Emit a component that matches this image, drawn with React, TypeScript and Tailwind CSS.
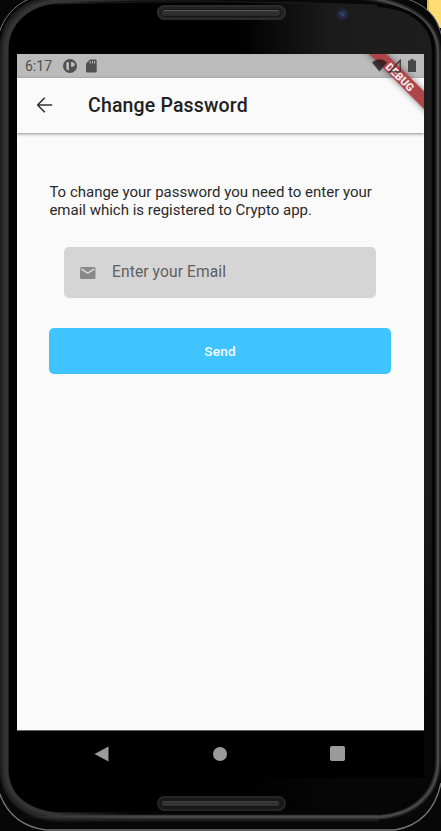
import React from "react";

function DeviceArtwork() {
  return (
    <svg className="absolute inset-0" width="441" height="831" viewBox="0 0 441 831" aria-hidden="true">
      <defs>
        <linearGradient id="face" x1="0" x2="1" y1="0" y2="0">
          <stop offset="0" stopColor="#000" />
          <stop offset="0.54" stopColor="#000" />
          <stop offset="0.76" stopColor="#1b1b1b" />
          <stop offset="1" stopColor="#1e1e1e" />
        </linearGradient>
        <linearGradient id="fade" x1="0" x2="0" y1="0" y2="1">
          <stop offset="0" stopColor="#000" stopOpacity="0" />
          <stop offset="0.6" stopColor="#000" stopOpacity="0.1" />
          <stop offset="0.9" stopColor="#000" stopOpacity="0.75" />
          <stop offset="1" stopColor="#000" stopOpacity="0.8" />
        </linearGradient>
        <linearGradient id="pill" x1="0" x2="0" y1="0" y2="1">
          <stop offset="0" stopColor="#444" />
          <stop offset="0.25" stopColor="#333" />
          <stop offset="1" stopColor="#292929" />
        </linearGradient>
        <linearGradient id="bottomRim" gradientUnits="userSpaceOnUse" x1="20" x2="150" y1="0" y2="0">
          <stop offset="0" stopColor="#484848" stopOpacity="0" />
          <stop offset="1" stopColor="#484848" />
        </linearGradient>
        <linearGradient id="bottomShade" gradientUnits="userSpaceOnUse" x1="50" x2="130" y1="0" y2="0">
          <stop offset="0" stopColor="#050505" stopOpacity="0" />
          <stop offset="1" stopColor="#050505" />
        </linearGradient>
        <radialGradient id="lens">
          <stop offset="0" stopColor="#34406c" />
          <stop offset="0.5" stopColor="#242943" />
          <stop offset="1" stopColor="#1c1c1e" />
        </radialGradient>
      </defs>
      <rect width="441" height="831" fill="#070707" />
      <rect x="427" width="14" height="28" fill="#ffdc73" />
      <rect x="427" width="2" height="28" fill="#e5b94e" />
      <path d="M0 34C5 19 13 7 28 0H408C426 5 438 17 441 34V784C434 810 418 826 395 831H46C22 828 8 815 0 793Z" fill="#080808" />
      <path d="M-1 33C4 18 13 6 29 -1M407 -1C426 5 438 17 442 38" fill="none" stroke="#757575" strokeWidth="1" />
      <path d="M220 -4Q110 -4 54 0Q25 3 12 22Q4 34 4 50V770C5 799 26 816 60 817H378" fill="none" stroke="#1c1c1c" strokeWidth="9" />
      <path d="M220 -4Q110 -4 54 1Q26 4 13 23Q5 34 5 50V770C6 798 27 815 60 816H378" fill="none" stroke="#282828" strokeWidth="7" />
      <path d="M220 -4Q110 -3 54 1.5Q27 4.5 14 24Q6 35 6 50V770C7 797 28 813 60 815H378" fill="none" stroke="#343434" strokeWidth="4" />
      <path d="M340 -5C412 -2 438 25 438 52V762C437 796 412 815 378 817" fill="none" stroke="#222" strokeWidth="6" />
      <path d="M340 -5C412 -2 438 25 438 52V762C437 796 412 815 378 817" fill="none" stroke="#484848" strokeWidth="2.5" />
      <path d="M20 817L380 817.01" fill="none" stroke="url(#bottomRim)" strokeWidth="2.5" />
      <path d="M9 50C9 26 27 7 54 4Q220 -1 377 5C409 7 431 23 432 51V761C431 790 410 810 377 812H64C29 811 9 796 9 768Z" fill="url(#face)" />
      <path d="M9 50C9 26 27 7 54 4Q220 -1 377 5C409 7 431 23 432 51V761C431 790 410 810 377 812H64C29 811 9 796 9 768Z" fill="url(#fade)" />
      <path d="M54 4Q220 -1 377 5C409 7 431 23 432 51" fill="none" stroke="#1d1d1d" />
      <path d="M377 5C409 7 433.5 23 433.5 51V761C432 790 412 811 378 813" fill="none" stroke="#050505" strokeWidth="3.5" />
      <path d="M50 813L380 813.01" fill="none" stroke="url(#bottomShade)" strokeWidth="3.5" />
      <path d="M-1 792C7 815 22 827 46 830H395C418 826 435 811 441 783" fill="none" stroke="#757575" strokeWidth="1.3" />
      <rect x="157" y="5" width="129" height="15" rx="7.5" fill="#222" />
      <rect x="158" y="6" width="127" height="13" rx="6.5" fill="none" stroke="#2c2c2c" strokeWidth="2" />
      <rect x="161" y="9.5" width="120" height="7" rx="3.5" fill="url(#pill)" stroke="#181818" />
      <path d="M164 10.5H278" stroke="#585858" strokeWidth="1" />
      <rect x="157" y="796" width="129" height="15" rx="7.5" fill="#191919" />
      <rect x="158" y="797" width="127" height="13" rx="6.5" fill="none" stroke="#252525" strokeWidth="2" />
      <rect x="161" y="800.5" width="119" height="6" rx="3" fill="#333" stroke="#151515" />
      <path d="M163 801.5H278" stroke="#3e3e3e" />
      <circle cx="342.5" cy="14" r="7" fill="url(#lens)" />
      <path d="M340 13H341M343 15H344" stroke="#56648f" />
    </svg>
  );
}

function StatusBar() {
  return (
    <div className="flex h-6 shrink-0 items-center bg-[#bbb] pl-2 text-[#505050]">
      <span className="w-[37px] text-[14px] leading-6">6:17</span>
      <svg width="16" height="16" viewBox="0 0 16 16" aria-hidden="true">
        <circle cx="8" cy="8" r="7" fill="currentColor" />
        <path d="M4.3 4.2H7V12.4L4.3 11.2ZM9 4.2H10.5A2.2 2.2 0 0 1 10.5 8.8H9Z" fill="#bbb" />
      </svg>
      <svg className="ml-[7px]" width="16" height="16" viewBox="0 0 16 16" aria-hidden="true">
        <path d="M5 1.5H10.5Q11.7 1.5 11.7 3V13Q11.7 14.5 10.5 14.5H2.2Q1 14.5 1 13V5.5Z" fill="currentColor" />
        <path d="M5.2 3V5.5M7.4 3V5.5M9.6 3V5.5" stroke="#bbb" />
      </svg>
    </div>
  );
}

function DebugRibbon() {
  return (
    <svg className="absolute right-0 top-0" width="64" height="64" viewBox="0 0 64 64" aria-label="Debug">
      <defs>
        <filter id="ribbonShadow" x="-30%" y="-30%" width="160%" height="160%">
          <feDropShadow dx="0" dy="0" stdDeviation="3" floodColor="#000" floodOpacity=".5" />
        </filter>
      </defs>
      <path d="M-13 -22L82 73V55L4 -22Z" fill="#ad4548" filter="url(#ribbonShadow)" />
      <path d="M12 8.5Q19.5 2 27 8.5L19.5 17.5Z" fill="#201818" opacity=".8" />
      <text x="40" y="27" transform="rotate(45 40 23)" textAnchor="middle" fontFamily="Roboto, sans-serif" fontWeight="900" fontSize="11" fill="#f5e8e8">DEBUG</text>
      <path d="M40.2 6.5V17.8H29.5Z" fill="none" stroke="#3c3030" strokeWidth="1.3" />
      <path d="M48 6.5H50.5V5H53.5V6.5H56V18H48Z" fill="#484848" />
    </svg>
  );
}

export default function App() {
  return (
    <main className="relative h-[831px] w-[441px] overflow-hidden bg-black pl-[17px] pt-[54px] font-['Roboto',sans-serif]">
      <DeviceArtwork />
      <section className="relative flex h-[724px] w-[407px] flex-col overflow-hidden bg-[#fafafa]">
        <StatusBar />
        <header className="flex h-[55px] shrink-0 items-center bg-[#fafafa] pl-5 shadow-[0_1px_3px_rgba(0,0,0,0.45)]">
          <svg className="mb-px" width="16" height="16" viewBox="0 0 16 16" fill="none" stroke="#333" strokeWidth="1.6" aria-label="Back">
            <path d="M15.2 8H.8M7.8 .8L.6 8L7.8 15.2" />
          </svg>
          <h1 className="ml-[35px] text-[19.5px] font-medium tracking-[0.16px] text-[#212121]">Change Password</h1>
        </header>
        <div className="flex grow flex-col px-8 pt-[50px]">
          <p className="whitespace-nowrap pl-[0.4px] text-[15px] leading-[18px] text-[#2a2a2a]">
            To change your password you need to enter your<br />email which is registered to Crypto app.
          </p>
          <div className="ml-[15px] mr-4 mt-7 flex h-[51px] items-center rounded-[5px] bg-[#d5d5d5] pl-4 text-[#606060]">
            <svg width="16" height="12" viewBox="0 0 16 12" aria-hidden="true">
              <rect width="15.5" height="12" rx="1.5" fill="#898989" />
              <path d="M1.2 2L7.75 6.2L14.3 2" fill="none" stroke="#d5d5d5" strokeWidth="1.5" />
            </svg>
            <span className="ml-4 pt-px text-[15.6px] tracking-[0.1px]">Enter your Email</span>
          </div>
          <button className="mr-px mt-[30px] h-[46px] rounded-[5px] bg-[#40c4ff] text-[13.6px] font-medium tracking-[0.2px] text-[#f5fcff]">Send</button>
        </div>
        <nav className="flex h-12 shrink-0 items-center border-t border-[#626262] bg-black pb-0.5 pl-[77px] text-[#9b9b9b]">
          <svg width="15" height="16" viewBox="0 0 15 16" aria-label="Back">
            <path d="M14.5 .5V15.5L.5 8Z" fill="currentColor" />
          </svg>
          <span className="ml-[104px] size-[14px] rounded-full bg-current" />
          <span className="ml-[103px] size-[15px] rounded-[2px] bg-current" />
        </nav>
        <DebugRibbon />
      </section>
    </main>
  );
}
